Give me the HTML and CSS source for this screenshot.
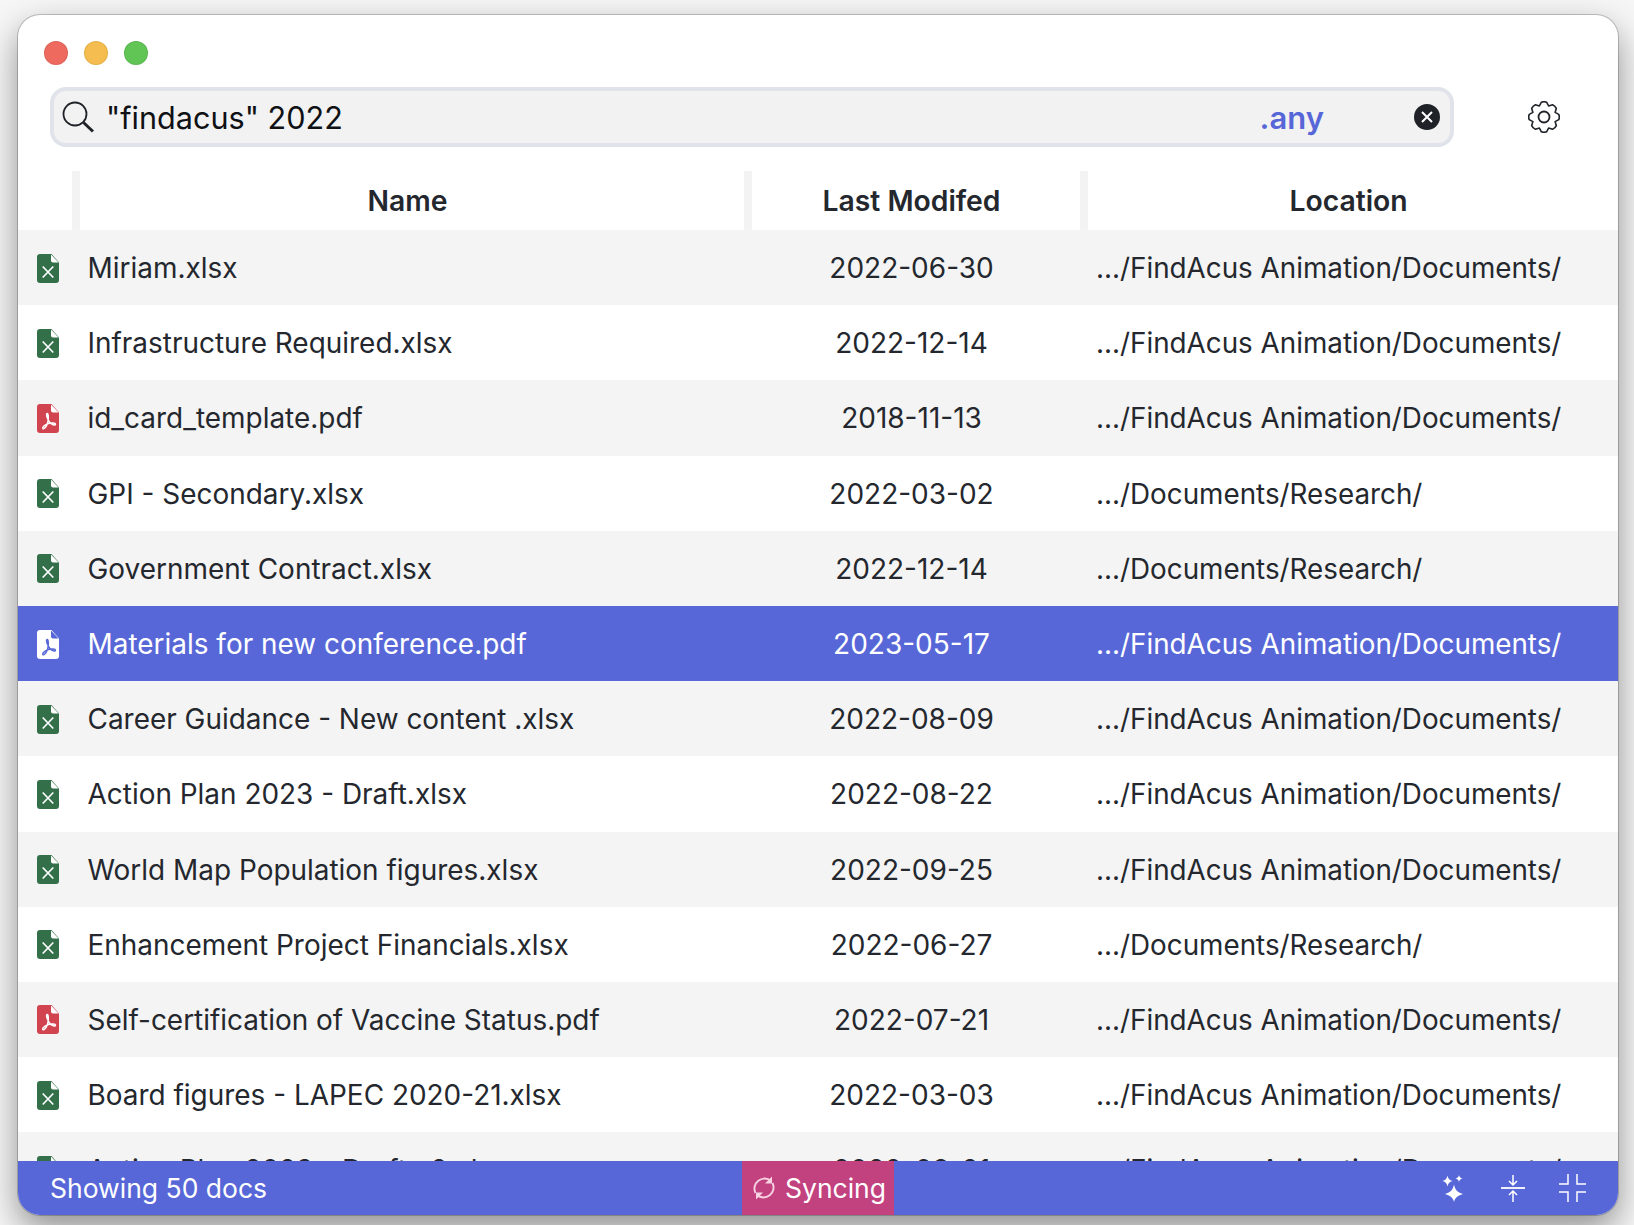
FILE: index.html
```html
<!DOCTYPE html>
<html lang="en">
<head>
    <meta charset="UTF-8">
    <title>FindAcus</title>
    <link rel="stylesheet" href="styles.css">
</head>
<body>
    <svg class="defs" width="0" height="0">
        <symbol id="doc-xlsx" viewBox="0 0 22 29">
            <path d="M3 0h11.500L22 8.500V26a3 3 0 0 1-3 3H3a3 3 0 0 1-3-3V3a3 3 0 0 1 3-3z" fill="#33704a"/>
            <path d="M14 .5 21.500 8.500h-5.500a2 2 0 0 1-2-2z" fill="#fff"/>
            <path d="M5.700 12.500 16.300 23.500M16.300 12.500 5.700 23.500" stroke="#fff" stroke-width="1.700" fill="none"/>
        </symbol>
        <symbol id="doc-pdf" viewBox="0 0 22 29">
            <path d="M3 0h11.500L22 8.500V26a3 3 0 0 1-3 3H3a3 3 0 0 1-3-3V3a3 3 0 0 1 3-3z" fill="#d1444f"/>
            <path d="M14 .5 21.500 8.500h-5.500a2 2 0 0 1-2-2z" fill="#fff"/>
            <path d="M10.300 9.500c-1 0-1 2 .3 5 1.200 2.800 3.500 6 6.400 6.500 2 .3 2-1.800-.5-1.900-3.500-.2-8 1.200-10 3.500-1.500 1.700-.5 3 1 1.700 2.200-2 3.800-6.500 3.800-10.800 0-2.500-.3-4-1-4z" stroke="#fff" stroke-width="1.500" fill="none"/>
        </symbol>
        <symbol id="doc-pdf-sel" viewBox="0 0 22 29">
            <path d="M3 0h11.500L22 8.500V26a3 3 0 0 1-3 3H3a3 3 0 0 1-3-3V3a3 3 0 0 1 3-3z" fill="#fff"/>
            <path d="M14 .5 21.500 8.500h-5.500a2 2 0 0 1-2-2z" fill="#5767d8"/>
            <path d="M10.300 9.500c-1 0-1 2 .3 5 1.200 2.800 3.500 6 6.400 6.500 2 .3 2-1.800-.5-1.900-3.500-.2-8 1.200-10 3.500-1.500 1.700-.5 3 1 1.700 2.200-2 3.800-6.500 3.800-10.800 0-2.500-.3-4-1-4z" stroke="#5767d8" stroke-width="1.500" fill="none"/>
        </symbol>
    </svg>

    <div class="window">
        <div class="lights">
            <span class="light red"></span>
            <span class="light yellow"></span>
            <span class="light green"></span>
        </div>

        <div class="toolbar">
            <div class="search">
                <svg class="search-icon" viewBox="0 0 32 32" width="32" height="32">
                    <circle cx="13" cy="13" r="11.500" fill="none" stroke="#1f2328" stroke-width="1.800"/>
                    <path d="M21.500 21.500 31 30.500" stroke="#1f2328" stroke-width="3" fill="none"/>
                </svg>
                <span class="query">"findacus" 2022</span>
                <span class="scope">.any</span>
                <svg class="clear" viewBox="0 0 26 26" width="26" height="26">
                    <circle cx="13" cy="13" r="13" fill="#1f2328"/>
                    <path d="M8 8 18 18M18 8 8 18" stroke="#fff" stroke-width="2" fill="none"/>
                </svg>
            </div>
            <svg class="gear" viewBox="0 0 32 32" width="32" height="32">
                <path d="M11.410 4.910 13.400 1.230Q16 .2 18.600 1.230L20.590 4.910 24.600 3.710Q27.170 4.830 28.290 7.400L27.090 11.410 30.770 13.400Q31.800 16 30.770 18.600L27.090 20.590 28.290 24.600Q27.170 27.170 24.600 28.290L20.590 27.090 18.600 30.770Q16 31.800 13.400 30.770L11.410 27.090 7.400 28.290Q4.830 27.170 3.710 24.600L4.910 20.590 1.230 18.600Q.2 16 1.230 13.400L4.910 11.410 3.710 7.400Q4.830 4.830 7.400 3.710z" fill="none" stroke="#1f2328" stroke-width="1.600" stroke-linejoin="round"/>
                <circle cx="16" cy="16" r="5.500" fill="none" stroke="#1f2328" stroke-width="1.800"/>
            </svg>
        </div>

        <div class="header">
            <div class="col-icon"></div>
            <div class="col-name">Name</div>
            <div class="col-date">Last Modifed</div>
            <div class="col-loc">Location</div>
        </div>

        <div class="rows">
            <div class="row"><svg class="doc"><use href="#doc-xlsx"/></svg><div class="name">Miriam.xlsx</div><div class="date">2022-06-30</div><div class="loc">.../FindAcus Animation/Documents/</div></div>
            <div class="row"><svg class="doc"><use href="#doc-xlsx"/></svg><div class="name">Infrastructure Required.xlsx</div><div class="date">2022-12-14</div><div class="loc">.../FindAcus Animation/Documents/</div></div>
            <div class="row"><svg class="doc"><use href="#doc-pdf"/></svg><div class="name">id_card_template.pdf</div><div class="date">2018-11-13</div><div class="loc">.../FindAcus Animation/Documents/</div></div>
            <div class="row"><svg class="doc"><use href="#doc-xlsx"/></svg><div class="name">GPI - Secondary.xlsx</div><div class="date">2022-03-02</div><div class="loc">.../Documents/Research/</div></div>
            <div class="row"><svg class="doc"><use href="#doc-xlsx"/></svg><div class="name">Government Contract.xlsx</div><div class="date">2022-12-14</div><div class="loc">.../Documents/Research/</div></div>
            <div class="row selected"><svg class="doc"><use href="#doc-pdf-sel"/></svg><div class="name">Materials for new conference.pdf</div><div class="date">2023-05-17</div><div class="loc">.../FindAcus Animation/Documents/</div></div>
            <div class="row"><svg class="doc"><use href="#doc-xlsx"/></svg><div class="name">Career Guidance - New content .xlsx</div><div class="date">2022-08-09</div><div class="loc">.../FindAcus Animation/Documents/</div></div>
            <div class="row"><svg class="doc"><use href="#doc-xlsx"/></svg><div class="name">Action Plan 2023 - Draft.xlsx</div><div class="date">2022-08-22</div><div class="loc">.../FindAcus Animation/Documents/</div></div>
            <div class="row"><svg class="doc"><use href="#doc-xlsx"/></svg><div class="name">World Map Population figures.xlsx</div><div class="date">2022-09-25</div><div class="loc">.../FindAcus Animation/Documents/</div></div>
            <div class="row"><svg class="doc"><use href="#doc-xlsx"/></svg><div class="name">Enhancement Project Financials.xlsx</div><div class="date">2022-06-27</div><div class="loc">.../Documents/Research/</div></div>
            <div class="row"><svg class="doc"><use href="#doc-pdf"/></svg><div class="name">Self-certification of Vaccine Status.pdf</div><div class="date">2022-07-21</div><div class="loc">.../FindAcus Animation/Documents/</div></div>
            <div class="row"><svg class="doc"><use href="#doc-xlsx"/></svg><div class="name">Board figures - LAPEC 2020-21.xlsx</div><div class="date">2022-03-03</div><div class="loc">.../FindAcus Animation/Documents/</div></div>
            <div class="row"><svg class="doc"><use href="#doc-xlsx"/></svg><div class="name">Action Plan 2023 - Draft v2.xlsx</div><div class="date">2022-08-21</div><div class="loc">.../FindAcus Animation/Documents/</div></div>
        </div>

        <div class="footer">
            <div class="count">Showing 50 docs</div>
            <div class="sync">
                <svg viewBox="0 0 24 24" width="24" height="24" fill="none" stroke="#f7d3e3" stroke-width="1.900">
                    <path d="M19 5A10 10 0 0 0 3.500 17"/>
                    <path d="M5 19A10 10 0 0 0 20.500 7"/>
                    <path d="M20 .5v7h-7z" fill="#f7d3e3" stroke="none"/>
                    <path d="M4 23.500v-7h7z" fill="#f7d3e3" stroke="none"/>
                </svg>
                <span>Syncing</span>
            </div>
            <div class="actions">
                <svg class="sparkles" viewBox="0 0 21 27" width="21" height="27" fill="#fff">
                    <path d="M12 9.500c1 5 3 7.500 9 9.500-6 2-8 4-9 8-1-4-3-6-9-8 6-2 8-4.500 9-9.500z"/>
                    <path d="M5.500 .5c.5 3 1.800 4.500 5 5.500-3.200 1-4.500 2.500-5 5.500C5 8.500 3.700 7 .5 6c3.200-1 4.500-2.500 5-5.500z"/>
                    <path d="M17 0c.4 2 1.200 2.800 3.500 3.500-2.300.7-3.100 1.500-3.500 3.500-.4-2-1.200-2.800-3.500-3.500C15.800 2.800 16.600 2 17 0z"/>
                </svg>
                <svg class="squeeze" viewBox="0 0 24 28" width="24" height="28" fill="none" stroke="#fff" stroke-width="1.500">
                    <path d="M0 14h24" stroke-width="1.800"/>
                    <path d="M12 1v10M8 7l4 4 4-4"/>
                    <path d="M12 28V17M8 21l4-4 4 4"/>
                </svg>
                <svg class="shrink" viewBox="0 0 27 28" width="27" height="28" fill="none" stroke="#fff" stroke-width="1.500">
                    <path d="M0 10h9V0M18 0v10h9M0 18h9v10M18 28V18h9"/>
                </svg>
            </div>
        </div>
    </div>
</body>
</html>
```

FILE: styles.css
```css
* {
    margin: 0;
    padding: 0;
    box-sizing: border-box;
}

html, body {
    height: 100%;
}

body {
    width: 1634px;
    height: 1225px;
    padding: 15px 16px 10px 18px;
    background-color: #f6f6f6;
    font-family: "Inter", sans-serif;
    color: #24282e;
    overflow: hidden;
}

.defs {
    position: absolute;
}

.window {
    display: flex;
    flex-direction: column;
    width: 1600px;
    height: 1200px;
    background-color: #fff;
    border-radius: 22px;
    overflow: hidden;
    box-shadow: 0 0 0 1px rgba(0, 0, 0, 0.2), 0 14px 34px rgba(0, 0, 0, 0.42);
}

/* title bar */
.lights {
    display: flex;
    gap: 16px;
    padding: 26px 0 0 26px;
    height: 60px;
}

.light {
    width: 24px;
    height: 24px;
    border-radius: 50%;
    border: 1px solid rgba(0, 0, 0, 0.08);
}

.red { background-color: #ee6a5f; }
.yellow { background-color: #f5bd4f; }
.green { background-color: #61c555; }

.toolbar {
    display: flex;
    align-items: flex-start;
    height: 96px;
    padding: 12px 0 0 32px;
}

.search {
    display: flex;
    align-items: center;
    width: 1404px;
    height: 60px;
    padding: 0 10px 0 8px;
    background-color: #f2f2f2;
    border: 4px solid #e0e3e9;
    border-radius: 16px;
}

.search-icon {
    flex: none;
}

.query {
    flex: 1;
    margin-left: 12px;
    font-size: 30.6px;
    color: #0f1114;
}

.scope {
    margin-right: 90px;
    font-size: 31px;
    font-weight: 600;
    color: #5767d8;
}

.gear {
    margin: 14px 0 0 74px;
}

/* table */
.header {
    display: grid;
    grid-template-columns: 54px 672px 336px 1fr;
    height: 59px;
    font-size: 28.300px;
    font-weight: 600;
    text-align: center;
    line-height: 60px;
}

.col-name, .col-date, .col-loc {
    padding-right: 9px;
    border-left: 8px solid #f3f3f3;
}

.rows {
    flex: 1;
    overflow: hidden;
}

.row {
    display: grid;
    grid-template-columns: 69.500px 658.500px 335px 1fr;
    align-items: center;
    height: 75.2px;
    padding-top: 1px;
    font-size: 27.800px;
}

.row:nth-child(odd) {
    background-color: #f4f4f4;
}

.row.selected {
    background-color: #5767d8;
    color: #fff;
}

.doc {
    width: 22px;
    height: 29px;
    margin-left: 19px;
}

.name {
    font-size: 27.950px;
}

.date {
    padding-right: 4px;
    font-size: 28px;
    text-align: center;
}

.loc {
    padding-left: 15px;
}

.footer {
    display: flex;
    align-items: center;
    height: 54px;
    background-color: #5767d8;
    color: #fff;
    font-size: 26.500px;
}

.count {
    width: 724px;
    padding-left: 32px;
}

.sync {
    display: flex;
    align-items: center;
    gap: 9px;
    height: 100%;
    width: 152px;
    padding-left: 10px;
    background-color: #c2417f;
}

.actions {
    display: flex;
    align-items: center;
    margin-left: auto;
    padding-right: 32px;
}

.squeeze {
    margin: 0 34px 0 38px;
}
```
